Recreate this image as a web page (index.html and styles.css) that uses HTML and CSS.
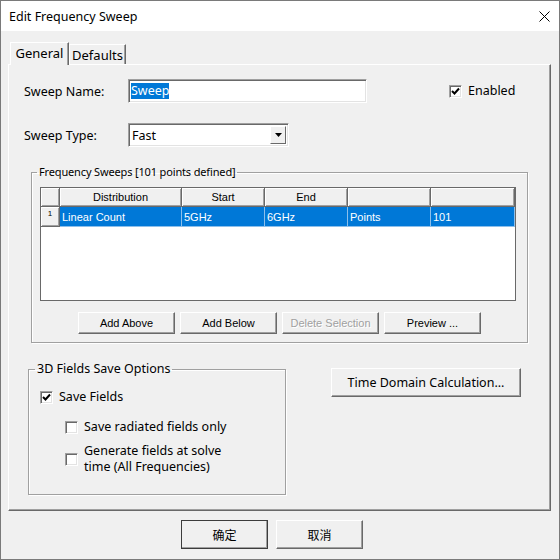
FILE: index.html
```html
<!DOCTYPE html>
<html lang="en">
<head>
<meta charset="UTF-8">
<title>Edit Frequency Sweep</title>
<link rel="stylesheet" href="styles.css">
</head>
<body>
  <div class="window">
    <div class="titlebar">
      <span>Edit Frequency Sweep</span>
      <svg class="close" width="11" height="11" viewBox="0 0 11 11">
        <path d="M0.5 0.5 L10.5 10.5 M10.5 0.5 L0.5 10.5" stroke="#000" stroke-width="1"/>
      </svg>
    </div>

    <div class="client">
      <div class="tabs">
        <div class="tab active">General</div>
        <div class="tab">Defaults</div>
      </div>

      <div class="panel">
        <div class="row name-row">
          <span class="label">Sweep Name:</span>
          <div class="field"><span class="selected">Sweep</span></div>
          <label class="check enabled">
            <span class="box checked"><svg width="9" height="9" viewBox="0 0 9 9"><path d="M1 4 L3.5 6.5 L8 1.5" fill="none" stroke="#000" stroke-width="2"/></svg></span>
            Enabled
          </label>
        </div>

        <div class="row type-row">
          <span class="label">Sweep Type:</span>
          <div class="select">
            <span class="select-text">Fast</span>
            <span class="arrow"><svg width="7" height="4" viewBox="0 0 7 4"><path d="M0 0 H7 L3.5 4 Z" fill="#000"/></svg></span>
          </div>
        </div>

        <fieldset class="group sweeps">
          <legend>Frequency Sweeps [101 points defined]</legend>
          <div class="grid">
            <div class="hcell"></div>
            <div class="hcell">Distribution</div>
            <div class="hcell">Start</div>
            <div class="hcell">End</div>
            <div class="hcell"></div>
            <div class="hcell"></div>

            <div class="rowhead">1</div>
            <div class="cell">Linear Count</div>
            <div class="cell">5GHz</div>
            <div class="cell">6GHz</div>
            <div class="cell">Points</div>
            <div class="cell">101</div>
          </div>
          <div class="grid-buttons">
            <button class="btn small">Add Above</button>
            <button class="btn small">Add Below</button>
            <button class="btn small" disabled>Delete Selection</button>
            <button class="btn small">Preview ...</button>
          </div>
        </fieldset>

        <div class="lower">
          <fieldset class="group fields">
            <legend>3D Fields Save Options</legend>
            <label class="check opt first">
              <span class="box checked"><svg width="9" height="9" viewBox="0 0 9 9"><path d="M1 4 L3.5 6.5 L8 1.5" fill="none" stroke="#000" stroke-width="2"/></svg></span>
              Save Fields
            </label>
            <label class="check opt sub radiated">
              <span class="box"></span>
              Save radiated fields only
            </label>
            <label class="check opt sub generate">
              <span class="box"></span>
              <span>Generate fields at solve<br>time (All Frequencies)</span>
            </label>
          </fieldset>
          <button class="btn time">Time Domain Calculation...</button>
        </div>
      </div>

      <div class="actions">
        <button class="btn dialog default">确定</button>
        <button class="btn dialog">取消</button>
      </div>
    </div>
  </div>
</body>
</html>
```

FILE: styles.css
```css
body {
  margin: 0;
  font-family: "Noto Sans", "Liberation Sans", sans-serif;
  font-size: 12.5px;
  color: #000;
}
.window {
  width: 560px;
  height: 560px;
  box-sizing: border-box;
  border: 1px solid #7a7a7a;
  background-color: #f0f0f0;
  display: flex;
  flex-direction: column;
}
.titlebar {
  height: 30px;
  flex: none;
  background-color: #fff;
  display: flex;
  align-items: center;
  justify-content: space-between;
  padding: 0 9px 0 8px;
  font-size: 12.5px;
}
.client {
  padding: 11px 0 0 7px;
}

/* tab strip */
.tabs {
  display: flex;
  align-items: flex-end;
  height: 22px;
  padding-left: 2px;
  font-size: 13px;
}
.tab {
  width: 57px;
  height: 20px;
  box-sizing: border-box;
  border-top: 1px solid #fff;
  border-left: 1px solid #fff;
  border-right: 1px solid #696969;
  box-shadow: inset -1px 0 #a0a0a0;
  display: flex;
  align-items: center;
  justify-content: center;
}
.tab.active {
  width: 59px;
  height: 23px;
  margin-bottom: -1px;
  position: relative;
  z-index: 1;
  background-color: #f0f0f0;
  padding-bottom: 3px;
}

/* tab page */
.panel {
  width: 543px;
  height: 447px;
  box-sizing: border-box;
  border-top: 1px solid #fff;
  border-left: 1px solid #fff;
  border-right: 1px solid #696969;
  border-bottom: 1px solid #696969;
  box-shadow: inset -1px -1px #a0a0a0;
}
.row {
  display: flex;
  align-items: center;
  height: 24px;
  margin-left: 15px;
}
.name-row {
  margin-top: 14px;
}
.type-row {
  margin-top: 20px;
}
.label {
  width: 104px;
}
.field, .select {
  height: 24px;
  box-sizing: border-box;
  background-color: #fff;
  border-top: 1px solid #a0a0a0;
  border-left: 1px solid #a0a0a0;
  border-right: 1px solid #fff;
  border-bottom: 1px solid #fff;
  box-shadow: inset 1px 1px #696969, inset -1px -1px #e3e3e3;
  display: flex;
  align-items: center;
}
.field {
  width: 239px;
  padding-left: 2px;
}
.selected {
  background-color: #0078d7;
  color: #fff;
  line-height: 16px;
}
.select {
  width: 161px;
  padding: 2px;
}
.select-text {
  flex: 1;
  padding-left: 1px;
}
.arrow {
  width: 16px;
  height: 18px;
  box-sizing: border-box;
  background-color: #f0f0f0;
  border-top: 1px solid #fff;
  border-left: 1px solid #fff;
  border-right: 1px solid #696969;
  border-bottom: 1px solid #696969;
  display: flex;
  align-items: center;
  justify-content: center;
}

/* checkboxes */
.check {
  display: flex;
  align-items: center;
  gap: 6px;
  line-height: 16px;
}
.box {
  width: 13px;
  height: 13px;
  flex: none;
  box-sizing: border-box;
  background-color: #fff;
  border-top: 1px solid #a0a0a0;
  border-left: 1px solid #a0a0a0;
  border-right: 1px solid #fff;
  border-bottom: 1px solid #fff;
  box-shadow: inset 1px 1px #696969, inset -1px -1px #e3e3e3;
  display: flex;
  align-items: center;
  justify-content: center;
}
.enabled {
  margin-left: 82px;
}

/* group boxes */
.group {
  margin: 0;
  padding: 0;
  border: 1px solid #a0a0a0;
  box-shadow: inset 1px 1px #fff, 1px 1px #fff;
}
.group legend {
  margin-left: 5px;
  padding: 0 2px;
  line-height: 14px;
}
.sweeps {
  width: 497px;
  box-sizing: border-box;
  margin: 18px 0 0 22px;
  padding: 8px 0 8px 0;
}
.sweeps legend {
  font-size: 11px;
  letter-spacing: -0.15px;
}

/* sweep table */
.grid {
  width: 476px;
  height: 114px;
  margin-left: 8px;
  box-sizing: border-box;
  border: 1px solid #696969;
  background-color: #fff;
  display: grid;
  grid-template-columns: 19px 122px 83px 83px 83px 84px;
  grid-auto-rows: min-content;
  font-family: "Liberation Sans", Arial, sans-serif;
  font-size: 11px;
}
.hcell, .rowhead {
  height: 19px;
  box-sizing: border-box;
  background-color: #f0f0f0;
  border-right: 1px solid #696969;
  border-bottom: 1px solid #696969;
  box-shadow: inset 1px 1px #fff, inset -1px -1px #a0a0a0;
  display: flex;
  align-items: center;
  justify-content: center;
}
.rowhead {
  height: 20px;
  font-size: 8px;
  align-items: flex-start;
  padding-top: 2px;
}
.cell {
  height: 20px;
  box-sizing: border-box;
  background-color: #0078d7;
  color: #fff;
  border-right: 1px solid #8cbfeb;
  border-bottom: 1px solid #8cbfeb;
  padding-left: 2px;
  display: flex;
  align-items: center;
}
.grid-buttons {
  display: flex;
  gap: 5px;
  margin: 11px 0 0 46px;
}

/* buttons */
.btn {
  box-sizing: border-box;
  background-color: #f0f0f0;
  border: 1px solid;
  border-color: #fff #696969 #696969 #fff;
  box-shadow: inset -1px -1px #a0a0a0;
  padding: 0;
  font-family: inherit;
  font-size: 12.5px;
  color: #000;
}
.btn.small {
  width: 97px;
  height: 22px;
  font-family: "Liberation Sans", Arial, sans-serif;
  font-size: 11px;
}
.btn[disabled] {
  color: #a0a0a0;
  text-shadow: 1px 1px 0 #fff;
}

.lower {
  display: flex;
  align-items: flex-start;
  margin: 19px 0 0 19px;
}
.fields {
  width: 258px;
  height: 133px;
  box-sizing: border-box;
}
.fields legend {
  margin-left: 6px;
}
.opt {
  margin-left: 11px;
}
.opt.first {
  margin-top: 13px;
}
.opt.sub {
  margin-left: 36px;
}
.radiated {
  margin-top: 14px;
}
.generate {
  margin-top: 8px;
}
.btn.time {
  width: 190px;
  height: 29px;
  margin: 6px 0 0 45px;
}

/* dialog buttons */
.actions {
  display: flex;
  gap: 8px;
  margin: 9px 0 0 173px;
}
.btn.dialog {
  width: 87px;
  height: 29px;
  font-family: "Noto Sans CJK SC", sans-serif;
  font-size: 12px;
}
.btn.default {
  outline: 1px solid #3c3c3c;
  outline-offset: -1px;
}
```
